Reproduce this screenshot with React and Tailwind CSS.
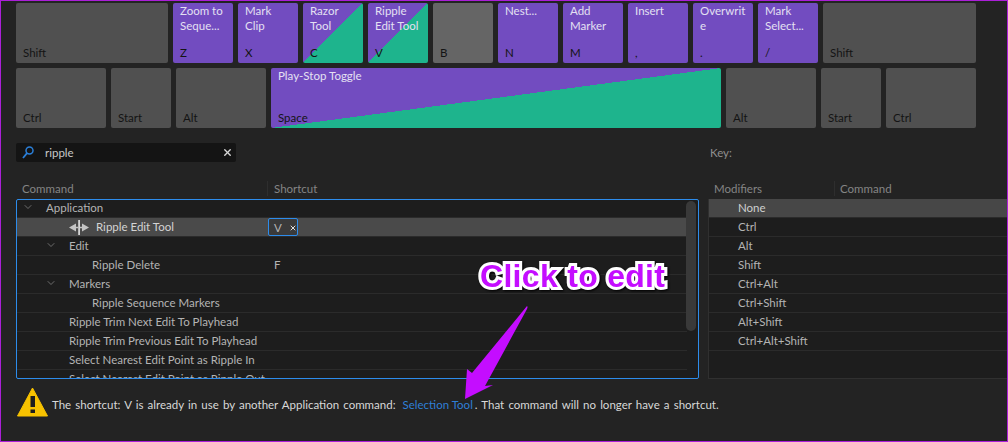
import { ChevronDown, X } from 'lucide-react'

const ROW_ONE = [
  { label: 'Zoom to\nSeque...', hint: 'Z', type: 'command' },
  { label: 'Mark\nClip', hint: 'X', type: 'command' },
  { label: 'Razor\nTool', hint: 'C', type: 'split' },
  { label: 'Ripple\nEdit Tool', hint: 'V', type: 'split' },
  { label: '', hint: 'B', type: 'light' },
  { label: 'Nest...', hint: 'N', type: 'command' },
  { label: 'Add\nMarker', hint: 'M', type: 'command' },
  { label: 'Insert', hint: ',', type: 'command' },
  { label: 'Overwrit\ne', hint: '.', type: 'command' },
  { label: 'Mark\nSelect...', hint: '/', type: 'command' },
]

const COMMANDS = [
  { label: 'Application', indent: 'pl-[29px]', chevron: 'ml-[5px]', first: true },
  { label: 'Ripple Edit Tool', selected: true },
  { label: 'Edit', indent: 'pl-[52px]', chevron: 'ml-[28px]' },
  { label: 'Ripple Delete', indent: 'pl-[75px]', shortcut: 'F' },
  { label: 'Markers', indent: 'pl-[52px]', chevron: 'ml-[28px]' },
  { label: 'Ripple Sequence Markers', indent: 'pl-[75px]' },
  { label: 'Ripple Trim Next Edit To Playhead', indent: 'pl-[52px]' },
  { label: 'Ripple Trim Previous Edit To Playhead', indent: 'pl-[52px]' },
  { label: 'Select Nearest Edit Point as Ripple In', indent: 'pl-[52px]' },
  { label: 'Select Nearest Edit Point as Ripple Out', indent: 'pl-[52px]' },
]

const MODIFIERS = ['None', 'Ctrl', 'Alt', 'Shift', 'Ctrl+Alt', 'Ctrl+Shift', 'Alt+Shift', 'Ctrl+Alt+Shift']

const KEY_STYLES = {
  blank: 'bg-[#505050]',
  light: 'bg-[#656565]',
  command: 'bg-[#724cc0]',
  split: 'bg-[linear-gradient(to_bottom_right,#724cc0_50%,#1eb48d_50%)]',
}

function Key({ label, hint, type = 'blank', width = 'w-[60px]' }) {
  return (
    <div className={`${width} ${KEY_STYLES[type]} h-[60px] shrink-0 rounded-[2px] flex flex-col justify-between pl-[7px] pr-[2px] pb-[3px]`}>
      <div className="text-[#e4e0f2] leading-[15px] whitespace-pre-line">{label}</div>
      <div className="text-[#141414] leading-[15px]">{hint}</div>
    </div>
  )
}

function RippleCursor() {
  return (
    <svg width="20" height="15" viewBox="0 0 20 15" className="shrink-0">
      <path d="M0 7.5 L7 3.5 V6.8 H9 V8.2 H7 V11.5 Z M20 7.5 L13 3.5 V6.8 H11 V8.2 H13 V11.5 Z" fill="#c4c4c4" />
      <rect x="9.2" y="0" width="1.8" height="15" fill="#d4d4d4" />
    </svg>
  )
}

function CommandRow({ row }) {
  if (row.selected) {
    return (
      <div className="h-[19px] shrink-0 flex items-center bg-[#4a4a4a] border-b border-[#2b2b2b] text-[#d4d4d4]">
        <div className="w-[252px] shrink-0 flex items-center pl-[52px] gap-[7px]">
          <RippleCursor />
          <span className="pb-[2px]">{row.label}</span>
        </div>
        <div className="h-[18px] w-[30px] ml-[-1px] rounded-[2px] border border-[#2d8ceb] bg-[#3a3a3a] flex items-center pl-[5px] text-[#b5b5b5]">
          V
          <X size={8} strokeWidth={3} className="ml-[7px] mt-[2px] text-[#e0e0e0]" />
        </div>
      </div>
    )
  }
  return (
    <div className={`${row.first ? 'h-[18px]' : 'h-[19px]'} shrink-0 flex items-center pb-[2px] border-b border-[#2b2b2b] text-[#b4b4b4] whitespace-nowrap`}>
      <div className={`w-[252px] shrink-0 relative ${row.indent}`}>
        {row.chevron && (
          <ChevronDown size={12} strokeWidth={1.25} className={`absolute left-0 top-[1px] text-[#9a9a9a] ${row.chevron}`} />
        )}
        {row.label}
      </div>
      {row.shortcut && <span className="pl-[5px]">{row.shortcut}</span>}
    </div>
  )
}

export default function App() {
  return (
    <div
      className="relative w-[1008px] h-[442px] overflow-hidden bg-[#232323] border border-[#ab1fd8] pt-[2px] text-[11.5px] leading-[15px]"
      style={{ fontFamily: 'Lato, "Noto Sans", sans-serif' }}
    >
      {/* 키보드 */}
      <div className="flex flex-col gap-[5px] pl-[15px]">
        <div className="flex gap-[5px]">
          <Key hint="Shift" width="w-[152px]" />
          {ROW_ONE.map((k) => (
            <Key key={k.hint} label={k.label} hint={k.hint} type={k.type} />
          ))}
          <Key hint="Shift" width="w-[153px]" />
        </div>
        <div className="flex gap-[5px]">
          <Key hint="Ctrl" width="w-[90px]" />
          <Key hint="Start" />
          <Key hint="Alt" width="w-[90px]" />
          <Key label="Play-Stop Toggle" hint="Space" type="split" width="w-[450px]" />
          <Key hint="Alt" width="w-[90px]" />
          <Key hint="Start" />
          <Key hint="Ctrl" width="w-[90px]" />
        </div>
      </div>

      {/* 검색 */}
      <div className="flex items-center mt-[15px] pl-[15px] h-[19px]">
        <div className="w-[220px] h-[19px] bg-[#141414] rounded-[2px] flex items-center pl-[6px] pr-[3px] text-[#c8c8c8]">
          <svg width="12" height="13" viewBox="0 0 12 13" className="shrink-0">
            <circle cx="7.5" cy="4.5" r="3.5" fill="none" stroke="#2b7fd8" strokeWidth="1.5" />
            <path d="M5 7.2 L1 12" stroke="#2b7fd8" strokeWidth="1.8" />
          </svg>
          <span className="ml-[11px]">ripple</span>
          <X size={11} strokeWidth={3} className="ml-auto text-[#d8d8d8]" />
        </div>
        <span className="ml-[474px] text-[#8f8f8f]">Key:</span>
      </div>

      {/* 테이블 */}
      <div className="flex mt-[16px] pl-[15px]">
        <div className="w-[683px] shrink-0">
          <div className="h-[20px] mb-[1px] flex items-center text-[#858585]">
            <span className="w-[251px] pl-[6px]">Command</span>
            <span className="pl-[6px] border-l border-[#2e2e2e]">Shortcut</span>
          </div>
          <div className="relative h-[180px] border border-[#2d8ceb] rounded-[2px] bg-[#1d1d1d] overflow-hidden flex flex-col pr-[11px]">
            {COMMANDS.map((row) => (
              <CommandRow key={row.label} row={row} />
            ))}
            <div className="absolute right-[2px] top-[1px] w-[10px] h-[130px] rounded-[5px] bg-[#393939]" />
          </div>
        </div>
        <div className="ml-[9px] flex-1">
          <div className="h-[20px] mb-[1px] flex items-center text-[#858585]">
            <span className="w-[126px] pl-[6px]">Modifiers</span>
            <span className="pl-[5px] border-l border-[#2e2e2e]">Command</span>
          </div>
          <div className="h-[180px] bg-[#1d1d1d] border-l border-b border-[#303030] flex flex-col">
            {MODIFIERS.map((m, i) => (
              <div
                key={m}
                className={`${i === 0 ? 'bg-[#474747] text-[#cfcfcf]' : 'text-[#b4b4b4]'} h-[19px] shrink-0 flex items-center pl-[29px] pb-[2px] border-b border-[#2b2b2b]`}
              >
                {m}
              </div>
            ))}
          </div>
        </div>
      </div>

      {/* 경고 */}
      <div className="flex items-center mt-[8px] pl-[16px] h-[30px]">
        <svg width="31" height="30" viewBox="0 0 31 30" className="shrink-0">
          <path d="M15.5 1 L30.5 29 H0.5 Z" fill="#f7c200" stroke="#f7c200" strokeWidth="1" strokeLinejoin="round" />
          <rect x="13.5" y="9" width="4.5" height="11" fill="#1d1d1d" />
          <rect x="13.5" y="22.5" width="4.5" height="3.5" fill="#1d1d1d" />
        </svg>
        <p className="ml-[4px] mt-[5px] text-[#d8d8d8] [word-spacing:1.2px] whitespace-nowrap">
          The shortcut: V is already in use by another Application command:
          <span className="text-[#2f7fd6] ml-[7px] [word-spacing:0]">Selection Tool</span>
          <span className="ml-[2px]">. That command will no longer have a shortcut.</span>
        </p>
      </div>

      {/* 주석 */}
      <div className="absolute left-[479px] top-[257px] text-[#c40dff] text-[32px] tracking-[0.3px] leading-[36px] font-bold whitespace-nowrap [-webkit-text-stroke:6px_white] [paint-order:stroke_fill] [filter:drop-shadow(1px_1px_1px_#000)]" style={{ fontFamily: '"Liberation Sans", sans-serif' }}>
        Click to edit
      </div>
      <svg width="70" height="100" viewBox="0 0 70 100" className="absolute left-[459px] top-[303px]">
        <path d="M67 2 Q68 3 67 5 L25 82 L33 81 L5 95 L7 65 L12 69 Z" fill="#c40dff" />
      </svg>
    </div>
  )
}
